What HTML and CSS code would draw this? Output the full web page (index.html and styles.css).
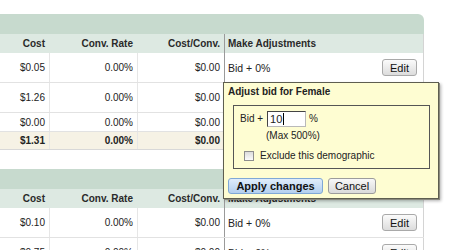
FILE: index.html
```html
<!DOCTYPE html>
<html lang="en">
<head>
    <meta charset="UTF-8">
    <title>Demographic bid adjustments</title>
    <link rel="stylesheet" href="styles.css">
</head>
<body>

    <div class="page">

        <div class="report">
            <div class="band"></div>
            <div class="row head">
                <div class="cell">Cost</div>
                <div class="cell">Conv. Rate</div>
                <div class="cell">Cost/Conv.</div>
                <div class="cell adjust">Make Adjustments</div>
            </div>
            <div class="row">
                <div class="cell">$0.05</div>
                <div class="cell">0.00%</div>
                <div class="cell">$0.00</div>
                <div class="cell adjust"><span>Bid + 0%</span><button class="edit">Edit</button></div>
            </div>
            <div class="row">
                <div class="cell">$1.26</div>
                <div class="cell">0.00%</div>
                <div class="cell">$0.00</div>
                <div class="cell adjust"><span>Bid + 0%</span><button class="edit">Edit</button></div>
            </div>
            <div class="row short">
                <div class="cell">$0.00</div>
                <div class="cell">0.00%</div>
                <div class="cell">$0.00</div>
                <div class="cell adjust"></div>
            </div>
            <div class="row total">
                <div class="cell">$1.31</div>
                <div class="cell">0.00%</div>
                <div class="cell">$0.00</div>
                <div class="cell adjust"></div>
            </div>
        </div>

        <div class="report second">
            <div class="band"></div>
            <div class="row head">
                <div class="cell">Cost</div>
                <div class="cell">Conv. Rate</div>
                <div class="cell">Cost/Conv.</div>
                <div class="cell adjust">Make Adjustments</div>
            </div>
            <div class="row">
                <div class="cell">$0.10</div>
                <div class="cell">0.00%</div>
                <div class="cell">$0.00</div>
                <div class="cell adjust"><span>Bid + 0%</span><button class="edit">Edit</button></div>
            </div>
            <div class="row">
                <div class="cell">$0.75</div>
                <div class="cell">0.00%</div>
                <div class="cell">$0.00</div>
                <div class="cell adjust"><span>Bid + 0%</span><button class="edit">Edit</button></div>
            </div>
        </div>

        <div class="popup">
            <div class="popup-title">Adjust bid for Female</div>
            <div class="popup-box">
                <div class="bid-line">
                    <span>Bid +</span>
                    <span class="bid-input">10<span class="caret"></span></span>
                    <span>%</span>
                </div>
                <div class="bid-max">(Max 500%)</div>
                <div class="exclude">
                    <span class="checkbox"></span>
                    <span>Exclude this demographic</span>
                </div>
            </div>
            <div class="popup-actions">
                <button class="apply">Apply changes</button>
                <button class="cancel">Cancel</button>
            </div>
        </div>

    </div>

</body>
</html>
```

FILE: styles.css
```css
* {
    margin: 0;
    padding: 0;
    box-sizing: border-box;
    font-family: "Liberation Sans", Arial, sans-serif;
}

body {
    background: #fff;
    color: #222;
    font-size: 10px;
}

.page {
    position: relative;
    padding-top: 14px;
    height: 250px;
    overflow: hidden;
}

.report {
    width: 424px;
}

.report.second {
    margin-top: 19px;
}

.band {
    height: 20px;
    background: #c7dace;
    border-top-right-radius: 6px;
}

.row {
    display: grid;
    grid-template-columns: 50px 88px 87px 199px;
    height: 30px;
    border-bottom: 1px solid #e2e2e2;
}

.row.short {
    height: 19px;
}

.cell {
    display: flex;
    align-items: center;
    justify-content: flex-end;
    padding: 0 4px;
    border-right: 1px solid #e6e6e6;
}

.cell:nth-child(3) {
    border-right: 1px solid #9a9a9a;
}

.cell.adjust {
    justify-content: space-between;
    padding: 0 6px 0 3px;
    border-right: 1px solid #d4d4d4;
    font-size: 10.5px;
}

.row.head {
    height: 19px;
    background: #dde9e2;
    border-bottom: none;
    font-weight: bold;
    color: #2a2a2a;
}

.row.head .cell:nth-child(1),
.row.head .cell:nth-child(2) {
    border-right-color: #dde9e2;
}

.row.head .cell.adjust {
    font-size: 10px;
}

.row.total {
    height: 18px;
    background: #f6f2e5;
    font-weight: bold;
    border-bottom: 1px solid #d8d8d8;
}

.edit {
    width: 35px;
    height: 17px;
    font-size: 11px;
    color: #111;
    background: linear-gradient(#fbfbfb, #dcdcdc);
    border: 1px solid #a9a9a9;
    border-radius: 3px;
}

.popup {
    position: absolute;
    left: 223px;
    top: 82px;
    width: 216px;
    height: 117px;
    background: #fefdd2;
    border: 1px solid #5e5e50;
    box-shadow: 1px 1px 0 #8a8a80, 2px 2px 3px rgba(0, 0, 0, 0.3);
    padding: 2px 4px 0 4px;
}

.popup-title {
    font-weight: bold;
    line-height: 14px;
}

.popup-box {
    margin: 6px 0 0 5px;
    width: 197px;
    height: 64px;
    border: 1px solid #555;
    padding: 4px 6px 0 6px;
}

.bid-line {
    display: flex;
    align-items: center;
    height: 17px;
}

.bid-input {
    display: flex;
    align-items: center;
    width: 39px;
    height: 16px;
    margin: 0 3px 0 4px;
    padding-left: 2px;
    background: #fff;
    border: 1px solid #b9b9b9;
    border-top-color: #444;
    border-left-color: #444;
    font-size: 11px;
}

.caret {
    width: 1px;
    height: 12px;
    background: #000;
    margin-left: 1px;
}

.bid-max {
    margin: 3px 0 0 26px;
    line-height: 12px;
}

.exclude {
    display: flex;
    align-items: center;
    gap: 6px;
    margin: 8px 0 0 4px;
    line-height: 12px;
}

.checkbox {
    width: 10px;
    height: 10px;
    border: 1px solid #8e8e8e;
    background: linear-gradient(#dcdcdc, #fbfbfb);
}

.popup-actions {
    display: flex;
    gap: 5px;
    margin-top: 9px;
}

.popup-actions button {
    height: 16px;
    font-size: 11px;
    color: #111;
    border-radius: 3px;
}

.apply {
    width: 95px;
    font-weight: bold;
    background: linear-gradient(#e0edfb, #b3cfef);
    border: 1px solid #7fa8d6;
}

.cancel {
    width: 48px;
    background: linear-gradient(#f8f8f8, #dadada);
    border: 1px solid #9c9c9c;
}
```
